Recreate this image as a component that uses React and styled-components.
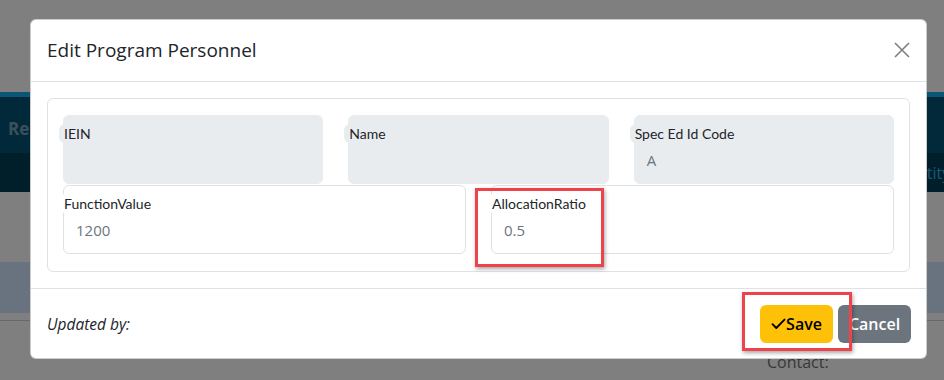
import React from 'react';
import styled, { createGlobalStyle } from 'styled-components';

const Global = createGlobalStyle`
  html, body { margin: 0; padding: 0; background: #fff; }
  body { font-family: "Open Sans", "Noto Sans", sans-serif; color: #212529; }
  #root { position: relative; width: 944px; height: 380px; overflow: hidden; }
`;

/* ---------- page behind the dialog ---------- */
const Page = styled.div`
  display: flex;
  flex-direction: column;
  width: 944px;
  height: 380px;
  overflow: hidden;
`;
const TopArea = styled.div`height: 92px; background: #fff;`;
const Stripe = styled.div`height: 5px; background: #16aee6;`;
const NavUpper = styled.div`
  height: 56px;
  background: #045274;
  display: flex;
  align-items: center;
  padding-left: 8px;
  padding-top: 6px;
  box-sizing: border-box;
`;
const NavTitle = styled.span`
  font-weight: 700;
  font-size: 17px;
  color: #76a0b8;
`;
const NavLower = styled.div`
  height: 39px;
  background: #033c56;
  display: flex;
  align-items: center;
  padding-left: 908px;
  box-sizing: border-box;
  white-space: nowrap;
`;
const NavLink = styled.span`
  font-size: 16px;
  color: #2fb4ea;
`;
const Gap = styled.div`height: 70px; background: #fff;`;
const TableHead = styled.div`height: 51px; background: #d2e4ff;`;
const TableRow = styled.div`
  height: 7px;
  background: #fff;
  border-bottom: 1px solid #d0d0d0;
`;
const ContactLine = styled.div`
  padding-left: 767px;
  margin-top: 29px;
  font-size: 16px;
  line-height: 24px;
  color: #707070;
`;

const Backdrop = styled.div`
  position: absolute;
  inset: 0;
  background: rgba(0, 0, 0, 0.5);
`;

/* ---------- dialog ---------- */
const Dialog = styled.div`
  position: absolute;
  top: 19px;
  left: 30px;
  width: 897px;
  box-sizing: border-box;
  background: #fff;
  border: 1px solid rgba(0, 0, 0, 0.2);
  border-radius: 6px;
  display: flex;
  flex-direction: column;
`;
const Header = styled.div`
  display: flex;
  align-items: center;
  justify-content: space-between;
  padding: 16px 15px 17px 16px;
  border-bottom: 1px solid #dee2e6;
`;
const Title = styled.h5`
  margin: 0;
  font-size: 19px;
  font-weight: 500;
  line-height: 28px;
  color: #212529;
`;
const CloseButton = styled.button`
  width: 18px;
  height: 18px;
  padding: 0;
  border: 0;
  background: transparent;
  display: flex;
  align-items: center;
  justify-content: center;
  cursor: pointer;
`;
const Body = styled.div`padding: 16px;`;
const Card = styled.div`
  border: 1px solid #dee2e6;
  border-radius: 6px;
  padding: 16px 15px 17px 15px;
  display: flex;
  flex-direction: column;
  gap: 1px;
`;
const FieldRow = styled.div`
  display: grid;
  grid-template-columns: repeat(${p => p.$cols}, 1fr);
  column-gap: 25px;
`;
const Field = styled.div`
  height: 69px;
  box-sizing: border-box;
  border: 1px solid ${p => (p.$disabled ? '#e9ecef' : '#dee2e6')};
  border-radius: 6px;
  background: ${p => (p.$disabled ? '#e9ecef' : '#fff')};
  display: flex;
  flex-direction: column;
  align-items: flex-start;
`;
const Label = styled.label`
  margin: 8px 0 0 -5px;
  padding: 0 6px 0 5px;
  height: 19px;
  line-height: 19px;
  font-family: Lato, "Open Sans", sans-serif;
  font-size: 14px;
  color: #212529;
  background: inherit;
  border-radius: 6px;
`;
const Value = styled.div`
  margin-top: 5px;
  padding: 0 12px;
  line-height: 24px;
  height: 24px;
  font-size: 15px;
  color: #6c757d;
`;
const Footer = styled.div`
  display: flex;
  align-items: center;
  justify-content: space-between;
  padding: 16px 15px 15px 16px;
  border-top: 1px solid #dee2e6;
`;
const Updated = styled.span`
  font-style: italic;
  font-size: 15.5px;
  color: #212529;
`;
const Buttons = styled.div`
  display: flex;
  gap: 5px;
`;
const Button = styled.button`
  height: 38px;
  width: 73px;
  border: 0;
  border-radius: 6px;
  padding: 0;
  display: flex;
  align-items: center;
  justify-content: center;
  font-family: inherit;
  font-size: 16px;
  font-weight: 600;
  background: ${p => (p.$variant === 'warning' ? '#ffc107' : '#6c757d')};
  color: ${p => (p.$variant === 'warning' ? '#000' : '#fff')};
`;
const Highlight = styled.div`
  position: absolute;
  box-sizing: border-box;
  border: 3px solid #ee434b;
  box-shadow: 1px 2px 4px rgba(0, 0, 0, 0.35);
  pointer-events: none;
`;

const CheckIcon = () => (
  <svg width="15" height="12" viewBox="0 0 15 12" fill="none">
    <polyline points="1.5,6.2 5.3,10 13.5,1.6" stroke="#000" strokeWidth="1.9" strokeLinecap="round" strokeLinejoin="round" />
  </svg>
);

const CloseIcon = () => (
  <svg width="16" height="16" viewBox="0 0 16 16">
    <path d="M1 1 L15 15 M15 1 L1 15" stroke="#7f7f7f" strokeWidth="1.6" />
  </svg>
);

export default function App() {
  return (
    <>
      <Global />
      <Page>
        <TopArea />
        <Stripe />
        <NavUpper><NavTitle>Reports</NavTitle></NavUpper>
        <NavLower><NavLink>Entity</NavLink></NavLower>
        <Gap />
        <TableHead />
        <TableRow />
        <ContactLine>Contact:</ContactLine>
      </Page>
      <Backdrop />
      <Dialog>
        <Header>
          <Title>Edit Program Personnel</Title>
          <CloseButton aria-label="Close"><CloseIcon /></CloseButton>
        </Header>
        <Body>
          <Card>
            <FieldRow $cols={3}>
              <Field $disabled><Label>IEIN</Label><Value></Value></Field>
              <Field $disabled><Label>Name</Label><Value></Value></Field>
              <Field $disabled><Label>Spec Ed Id Code</Label><Value>A</Value></Field>
            </FieldRow>
            <FieldRow $cols={2}>
              <Field><Label>FunctionValue</Label><Value>1200</Value></Field>
              <Field><Label>AllocationRatio</Label><Value>0.5</Value></Field>
            </FieldRow>
          </Card>
        </Body>
        <Footer>
          <Updated>Updated by:</Updated>
          <Buttons>
            <Button $variant="warning"><CheckIcon />Save</Button>
            <Button $variant="secondary">Cancel</Button>
          </Buttons>
        </Footer>
        <Highlight style={{ left: 444, top: 168, width: 129, height: 79 }} />
        <Highlight style={{ left: 711, top: 272, width: 110, height: 59 }} />
      </Dialog>
    </>
  );
}
